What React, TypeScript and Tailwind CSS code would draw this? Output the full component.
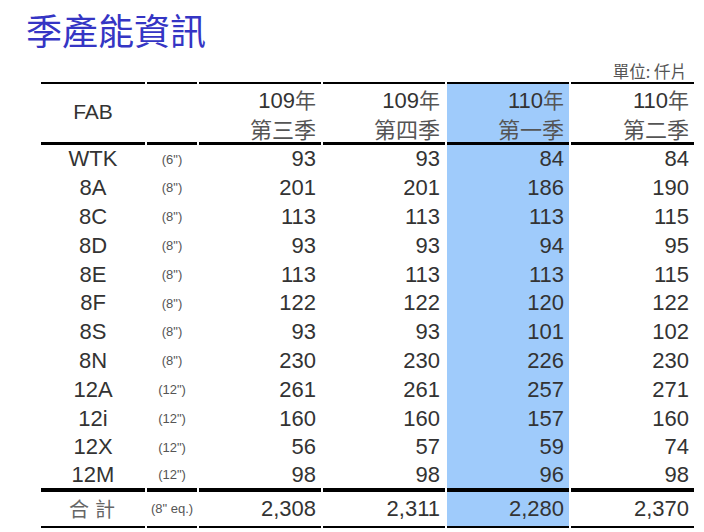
const rows: [string, string, string, string, string, string][] = [
  ['WTK', '(6")', '93', '93', '84', '84'],
  ['8A', '(8")', '201', '201', '186', '190'],
  ['8C', '(8")', '113', '113', '113', '115'],
  ['8D', '(8")', '93', '93', '94', '95'],
  ['8E', '(8")', '113', '113', '113', '115'],
  ['8F', '(8")', '122', '122', '120', '122'],
  ['8S', '(8")', '93', '93', '101', '102'],
  ['8N', '(8")', '230', '230', '226', '230'],
  ['12A', '(12")', '261', '261', '257', '271'],
  ['12i', '(12")', '160', '160', '157', '160'],
  ['12X', '(12")', '56', '57', '59', '74'],
  ['12M', '(12")', '98', '98', '96', '98'],
]

const quarters = [
  { year: '109', q: '第三季' },
  { year: '109', q: '第四季' },
  { year: '110', q: '第一季' },
  { year: '110', q: '第二季' },
]

const latin = "font-['Liberation_Sans',Arial,sans-serif]"
const cjk = "font-['Noto_Sans_CJK_TC','Noto_Sans_CJK_SC',sans-serif]"

export default function App() {
  return (
    <div className={`w-[704px] h-[532px] bg-white overflow-hidden ${latin}`}>
      <h1 className={`pl-[26px] pt-[11px] text-[36px] leading-[36px] text-[#3535c4] ${cjk}`}>季產能資訊</h1>

      <div className={`w-[691px] flex justify-end pr-[4px] mt-[15px] h-[20px] text-[16.5px] leading-[18px] text-[#555] ${cjk}`}>
        單位: 仟片
      </div>

      <table className="ml-[39px] border-separate [border-spacing:2px_0] table-fixed w-[657px] text-[#333]">
        <colgroup>
          <col className="w-[104px]" />
          <col className="w-[50px]" />
          <col className="w-[122px]" />
          <col className="w-[122px]" />
          <col className="w-[122px]" />
          <col className="w-[123px]" />
        </colgroup>
        <thead>
          <tr>
            <th className="h-[62px] border-t-2 border-b-[3px] border-black text-[21px] font-normal text-center align-middle pb-[3px]">
              FAB
            </th>
            <th className="border-t-2 border-b-[3px] border-black"></th>
            {quarters.map((c, i) => (
              <th
                key={i}
                className={`border-t-2 border-b-[3px] border-black font-normal text-right pr-[5px] align-top pt-[1px] ${
                  i === 2 ? 'bg-[#9fcbfb]' : ''
                }`}
              >
                <div className="leading-[29px] text-[22px]">
                  {c.year}
                  <span className={`${cjk} text-[#555] text-[21px]`}>年</span>
                </div>
                <div className={`${cjk} leading-[27px] text-[22px] text-[#555]`}>{c.q}</div>
              </th>
            ))}
          </tr>
        </thead>
        <tbody>
          {rows.map((r, ri) => {
            const last = ri === rows.length - 1
            return (
              <tr key={r[0]} className="h-[28.8px]">
                <td className={`text-center text-[22px] leading-[26px] ${last ? 'border-b-[3px] border-black' : ''}`}>{r[0]}</td>
                <td className={`text-center text-[13px] text-[#555] ${last ? 'border-b-[3px] border-black' : ''}`}>{r[1]}</td>
                {r.slice(2).map((v, i) => (
                  <td
                    key={i}
                    className={`text-right pr-[5px] text-[22px] leading-[26px] ${i === 2 ? 'bg-[#9fcbfb]' : ''} ${
                      last ? 'border-b-[3px] border-black' : ''
                    }`}
                  >
                    {v}
                  </td>
                ))}
              </tr>
            )
          })}
          <tr className="h-[37px]">
            <td className={`border-t border-b-2 border-black text-center text-[20px] text-[#666] tracking-[6px] pl-[4px] ${cjk}`}>
              合計
            </td>
            <td className="border-t border-b-2 border-black text-center text-[13px] text-[#555] whitespace-nowrap">
              (8" eq.)
            </td>
            {['2,308', '2,311', '2,280', '2,370'].map((v, i) => (
              <td
                key={i}
                className={`border-t border-b-2 border-black text-right pr-[5px] text-[22px] ${i === 2 ? 'bg-[#9fcbfb]' : ''}`}
              >
                {v}
              </td>
            ))}
          </tr>
        </tbody>
      </table>
    </div>
  )
}
